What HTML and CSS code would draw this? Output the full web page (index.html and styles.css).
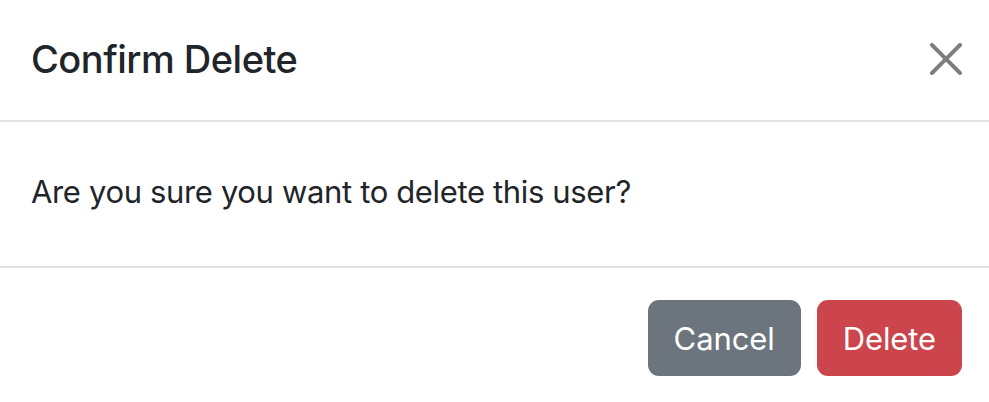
FILE: index.html
```html
<!DOCTYPE html>
<html lang="en">
<head>
<meta charset="utf-8">
<title>Confirm Delete</title>
<link rel="stylesheet" href="styles.css">
</head>
<body>
<div class="modal">
  <div class="modal-header">
    <h5 class="modal-title">Confirm Delete</h5>
    <button class="btn-close" type="button" aria-label="Close">
      <svg viewBox="0 0 16 16" width="32" height="32" aria-hidden="true"><path fill="currentColor" d="M.293.293a1 1 0 0 1 1.414 0L8 6.586 14.293.293a1 1 0 1 1 1.414 1.414L9.414 8l6.293 6.293a1 1 0 0 1-1.414 1.414L8 9.414l-6.293 6.293a1 1 0 0 1-1.414-1.414L6.586 8 .293 1.707a1 1 0 0 1 0-1.414z"/></svg>
    </button>
  </div>
  <div class="modal-body">
    <p>Are you sure you want to delete this user?</p>
  </div>
  <div class="modal-footer">
    <button class="btn btn-secondary" type="button">Cancel</button>
    <button class="btn btn-danger" type="button">Delete</button>
  </div>
</div>
</body>
</html>
```
FILE: styles.css
```css
html, body {
  margin: 0;
  padding: 0;
  background: #fff;
}
body {
  font-family: Inter, "Liberation Sans", sans-serif;
  color: #212529;
  width: 989px;
  height: 402px;
  overflow: hidden;
}
.modal {
  display: flex;
  flex-direction: column;
}
.modal-header {
  display: flex;
  align-items: center;
  justify-content: space-between;
  height: 122px;
  box-sizing: border-box;
  padding: 0 27px 2px 31px;
  border-bottom: 2px solid #dee2e6;
}
.modal-title {
  margin: 0;
  font-size: 38px;
  font-weight: 500;
  line-height: 60px;
  letter-spacing: -0.5px;
}
.btn-close {
  border: 0;
  background: none;
  padding: 0;
  width: 32px;
  height: 32px;
  color: #000;
  opacity: 0.5;
  display: flex;
  cursor: pointer;
}
.modal-body {
  height: 146px;
  box-sizing: border-box;
  padding: 0 27px 0 31px;
  display: flex;
  align-items: center;
  border-bottom: 2px solid #dee2e6;
}
.modal-body p {
  margin: 0 0 4px;
  font-size: 31px;
  line-height: 48px;
  letter-spacing: -0.35px;
}
.modal-footer {
  display: flex;
  justify-content: flex-end;
  gap: 16px;
  padding: 32px 27px 0 31px;
}
.btn {
  height: 76px;
  border: 0;
  border-radius: 11px;
  color: #fff;
  font-family: inherit;
  font-size: 31px;
  padding: 0 26px;
  letter-spacing: -0.1px;
}
.btn-secondary { background: #6c757d; }
.btn-danger { background: #cc444c; }
```
